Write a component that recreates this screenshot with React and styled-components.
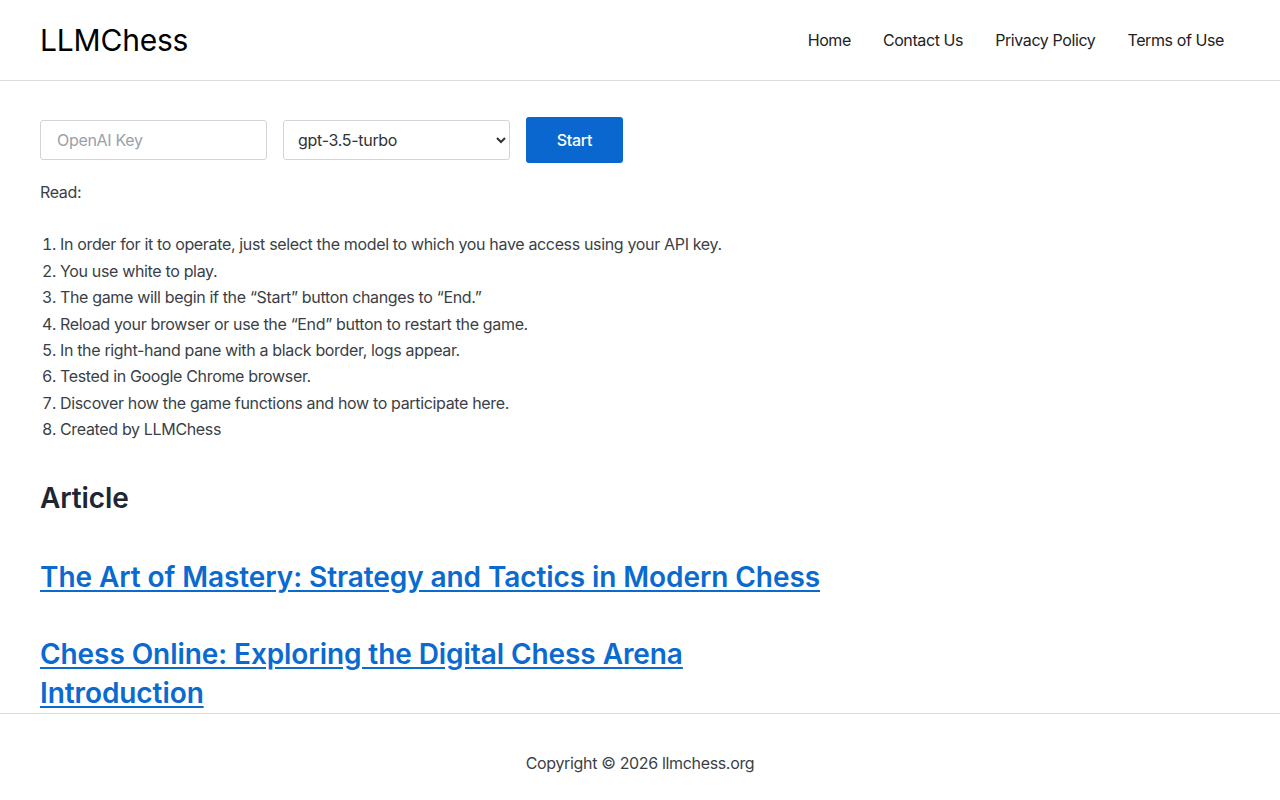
import styled, { createGlobalStyle } from 'styled-components';

const GlobalStyle = createGlobalStyle`
  * {
    box-sizing: border-box;
  }

  body {
    margin: 0;
    background: #ffffff;
    font-family: Inter, "Noto Sans", sans-serif;
    color: #3a3f47;
  }
`;

const steps = [
  'In order for it to operate, just select the model to which you have access using your API key.',
  'You use white to play.',
  'The game will begin if the \u201cStart\u201d button changes to \u201cEnd.\u201d',
  'Reload your browser or use the \u201cEnd\u201d button to restart the game.',
  'In the right-hand pane with a black border, logs appear.',
  'Tested in Google Chrome browser.',
  'Discover how the game functions and how to participate here.',
  'Created by LLMChess',
];

const articles = [
  'The Art of Mastery: Strategy and Tactics in Modern Chess',
  'Chess Online: Exploring the Digital Chess Arena Introduction',
];

const App = () => {
  return (
    <>
      <GlobalStyle />
      <Header>
        <Logo href="#">LLMChess</Logo>
        <Nav>
          <NavLink href="#">Home</NavLink>
          <NavLink href="#">Contact Us</NavLink>
          <NavLink href="#">Privacy Policy</NavLink>
          <NavLink href="#">Terms of Use</NavLink>
        </Nav>
      </Header>

      <Main>
        <Controls>
          <KeyInput placeholder="OpenAI Key" />
          <ModelSelect defaultValue="gpt-3.5-turbo">
            <option>gpt-3.5-turbo</option>
            <option>gpt-4</option>
          </ModelSelect>
          <StartButton>Start</StartButton>
        </Controls>

        <Intro>Read:</Intro>
        <Steps>
          {steps.map((step) => (
            <li key={step}>{step}</li>
          ))}
        </Steps>

        <SectionTitle>Article</SectionTitle>
        <Articles>
          {articles.map((title) => (
            <ArticleTitle key={title}>
              <a href="#">{title}</a>
            </ArticleTitle>
          ))}
        </Articles>
      </Main>

      <Footer>Copyright © 2026 llmchess.org</Footer>
    </>
  );
};

const Header = styled.header`
  display: flex;
  align-items: center;
  justify-content: space-between;
  height: 81px;
  padding: 0 40px;
  border-bottom: 1px solid #dcdcdc;
`;

const Logo = styled.a`
  font-size: 30px;
  font-weight: 400;
  color: #000;
  text-decoration: none;
  letter-spacing: -0.2px;
`;

const Nav = styled.nav`
  display: flex;
  align-items: center;
`;

const NavLink = styled.a`
  padding: 0 16px;
  font-size: 16px;
  letter-spacing: -0.4px;
  color: #222;
  text-decoration: none;
`;

const Main = styled.main`
  padding: 36px 40px 0;
`;

const Controls = styled.div`
  display: flex;
  align-items: center;
  gap: 16px;
`;

const KeyInput = styled.input`
  width: 227px;
  height: 40px;
  padding: 0 16px;
  border: 1px solid #d1d5db;
  border-radius: 3px;
  font-family: inherit;
  font-size: 16px;
  letter-spacing: -0.3px;
  color: #333;

  &::placeholder {
    color: #9aa0a8;
  }
`;

const ModelSelect = styled.select`
  width: 227px;
  height: 40px;
  padding: 0 10px;
  border: 1px solid #d1d5db;
  border-radius: 3px;
  background: #fff;
  font-family: inherit;
  font-size: 16px;
  letter-spacing: -0.3px;
  color: #333;
`;

const StartButton = styled.button`
  width: 97px;
  height: 46px;
  border: none;
  border-radius: 3px;
  background: #0a67d0;
  color: #fff;
  font-family: inherit;
  font-size: 16px;
  font-weight: 500;
  letter-spacing: -0.3px;
`;

const Intro = styled.p`
  margin: 16px 0 26px;
  font-size: 16px;
  line-height: 26.4px;
  letter-spacing: -0.34px;
`;

const Steps = styled.ol`
  margin: 0;
  padding-left: 20px;
  font-size: 16px;
  line-height: 26.4px;
  letter-spacing: -0.34px;
`;

const SectionTitle = styled.h2`
  margin: 36px 0 0;
  font-size: 28px;
  font-weight: 600;
  line-height: 39px;
  letter-spacing: -0.1px;
  color: #1e2633;
`;

const Articles = styled.div`
  max-width: 800px;
  padding-top: 40px;
  display: flex;
  flex-direction: column;
  gap: 38px;
`;

const ArticleTitle = styled.h3`
  margin: 0;
  font-size: 28px;
  font-weight: 600;
  line-height: 39px;
  letter-spacing: -0.08px;

  a {
    color: #0a6ad0;
    text-decoration: underline;
    text-underline-offset: 3px;
  }
`;

const Footer = styled.footer`
  padding: 36px 40px 26px;
  border-top: 1px solid #dcdcdc;
  text-align: center;
  font-size: 16px;
  line-height: 26.4px;
  letter-spacing: -0.34px;
  color: #3a3f47;
`;

export default App;
